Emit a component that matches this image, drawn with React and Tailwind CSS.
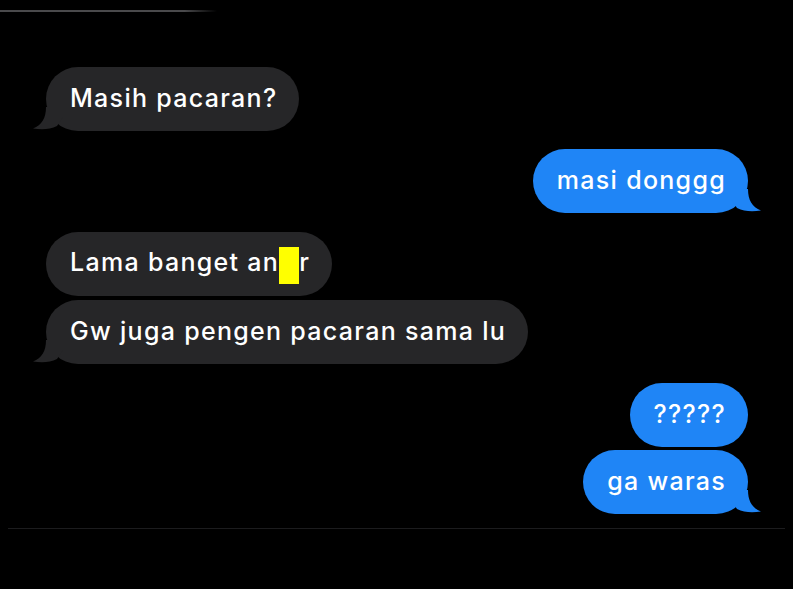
import React from 'react';

const GRAY = '#262628';
const BLUE = '#1f85f6';

function Tail({ side, color }) {
  const flip = side === 'right';
  return (
    <svg
      width="30"
      height="24"
      viewBox="0 0 30 24"
      className={`absolute bottom-0 ${flip ? 'right-[-13px] -scale-x-100' : 'left-[-13px]'}`}
    >
      <path d="M13 0 C13 11 9 18 0 21.5 C9 23 17 22.5 24 19 L30 10 L30 0 Z" fill={color} />
    </svg>
  );
}

function Bubble({ side = 'left', tail = false, className = '', children }) {
  const isLeft = side === 'left';
  const color = isLeft ? GRAY : BLUE;
  return (
    <div className={`flex ${isLeft ? 'justify-start' : 'justify-end'} ${className}`}>
      <div
        className={`relative h-16 flex items-center pl-6 pr-[22px] rounded-[32px] text-white text-[25px] tracking-[1.3px] font-medium whitespace-nowrap ${
          isLeft ? 'bg-[#262628]' : 'bg-[#1f85f6]'
        }`}
      >
        {tail && <Tail side={side} color={color} />}
        <span className="relative">{children}</span>
      </div>
    </div>
  );
}

export default function App() {
  return (
    <div
      className="w-[793px] h-[589px] bg-black overflow-hidden"
      style={{ fontFamily: 'Inter, "Liberation Sans", sans-serif' }}
    >
      <div className="pt-[10px]">
        <div className="w-[217px] h-[2px] bg-linear-to-r from-[#4a4a4c] from-85% to-transparent" />
      </div>

      <div className="flex flex-col pl-[46px] pr-[45px]">
        <Bubble tail className="mt-[55px]">Masih pacaran?</Bubble>
        <Bubble side="right" tail className="mt-[18px]">masi donggg</Bubble>
        <Bubble className="mt-[19px]">
          Lama banget an
          <span className="inline-block w-[20px] h-[37px] bg-[#ffff00] align-[-13px]" />
          r
        </Bubble>
        <Bubble tail className="mt-[4px]">Gw juga pengen pacaran sama lu</Bubble>
        <Bubble side="right" className="mt-[19px]">?????</Bubble>
        <Bubble side="right" tail className="mt-[3px]">ga waras</Bubble>
      </div>

      <div className="mt-[14px] ml-[8px] w-[777px] h-px bg-[#1c1c1e]" />
    </div>
  );
}
